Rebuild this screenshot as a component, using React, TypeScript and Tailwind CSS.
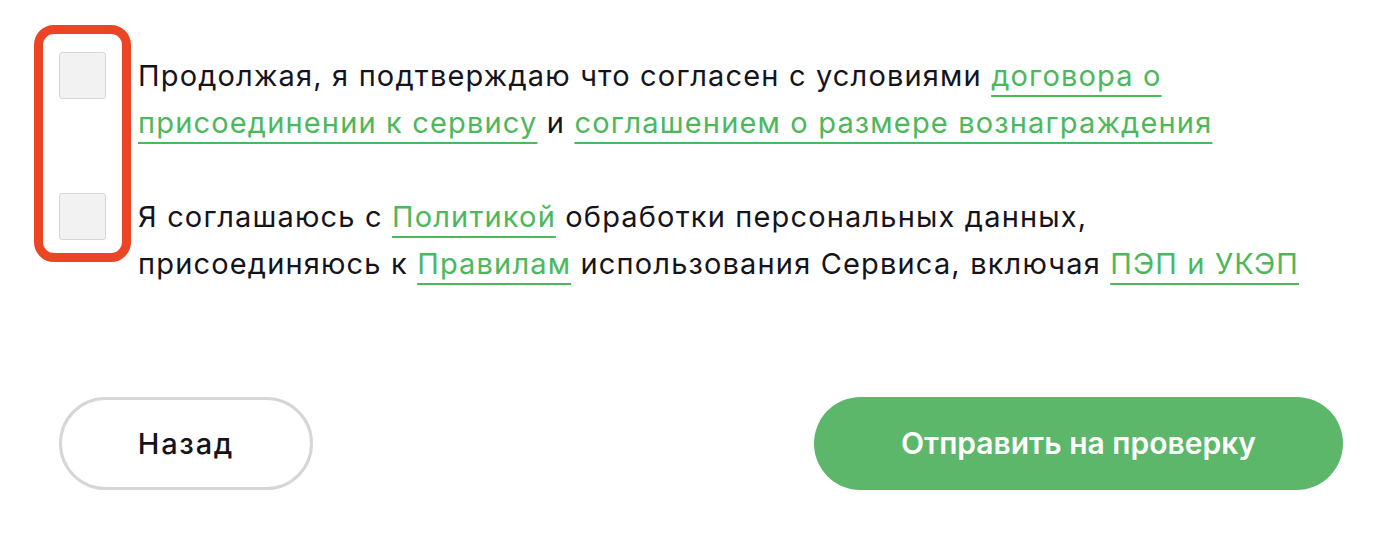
import React, { useState } from "react";

const Check = ({ checked, onToggle }: { checked: boolean; onToggle: () => void }) => (
  <button
    type="button"
    onClick={onToggle}
    className="w-[47px] h-[47px] shrink-0 rounded-[3px] border-[1.5px] border-[#d6d6d6] bg-[#f2f2f2]"
  >
    {checked ? "✓" : null}
  </button>
);

const Link = ({ children }: { children: React.ReactNode }) => (
  <a href="#" className="text-[#4cb85c] underline decoration-2 underline-offset-[9px] decoration-[#4cb85c]">
    {children}
  </a>
);

const App = () => {
  const [terms, setTerms] = useState(false);
  const [policy, setPolicy] = useState(false);

  return (
    <div className="w-[1400px] h-[552px] bg-white font-['Inter','Noto_Sans',sans-serif] text-[#15141c]">
      <div className="relative pl-[59px] pr-[57px] pt-[52px]">
        {/* highlight round the checkboxes */}
        <div className="absolute left-[34px] top-[25px] w-[97px] h-[237px] rounded-[20px] border-[9px] border-[#ec4526] pointer-events-none" />

        <div className="flex flex-col gap-[47px]">
          <div className="flex gap-[32px]">
            <Check checked={terms} onToggle={() => setTerms(!terms)} />
            <p className="text-[29px] leading-[47px] tracking-[0.04em]">
              Продолжая, я подтверждаю что согласен с условиями <Link>договора о</Link>
              <br />
              <Link>присоединении к сервису</Link> и <Link>соглашением о размере вознаграждения</Link>
            </p>
          </div>
          <div className="flex gap-[32px]">
            <Check checked={policy} onToggle={() => setPolicy(!policy)} />
            <p className="text-[29px] leading-[47px] tracking-[0.04em]">
              Я соглашаюсь с <Link>Политикой</Link> обработки персональных данных,
              <br />
              присоединяюсь к <Link>Правилам</Link> использования Сервиса, включая <Link>ПЭП и УКЭП</Link>
            </p>
          </div>
        </div>

        <div className="flex justify-between items-center mt-[110px]">
          <button className="w-[254px] h-[93px] rounded-full border-[3px] border-[#d6d6d6] bg-white text-[29px] font-medium tracking-[0.06em] text-[#15141c]">
            Назад
          </button>
          <button className="w-[529px] h-[93px] rounded-full bg-[#5cb76b] text-[30px] font-semibold text-white">
            Отправить на проверку
          </button>
        </div>
      </div>
    </div>
  );
};

export default App;
